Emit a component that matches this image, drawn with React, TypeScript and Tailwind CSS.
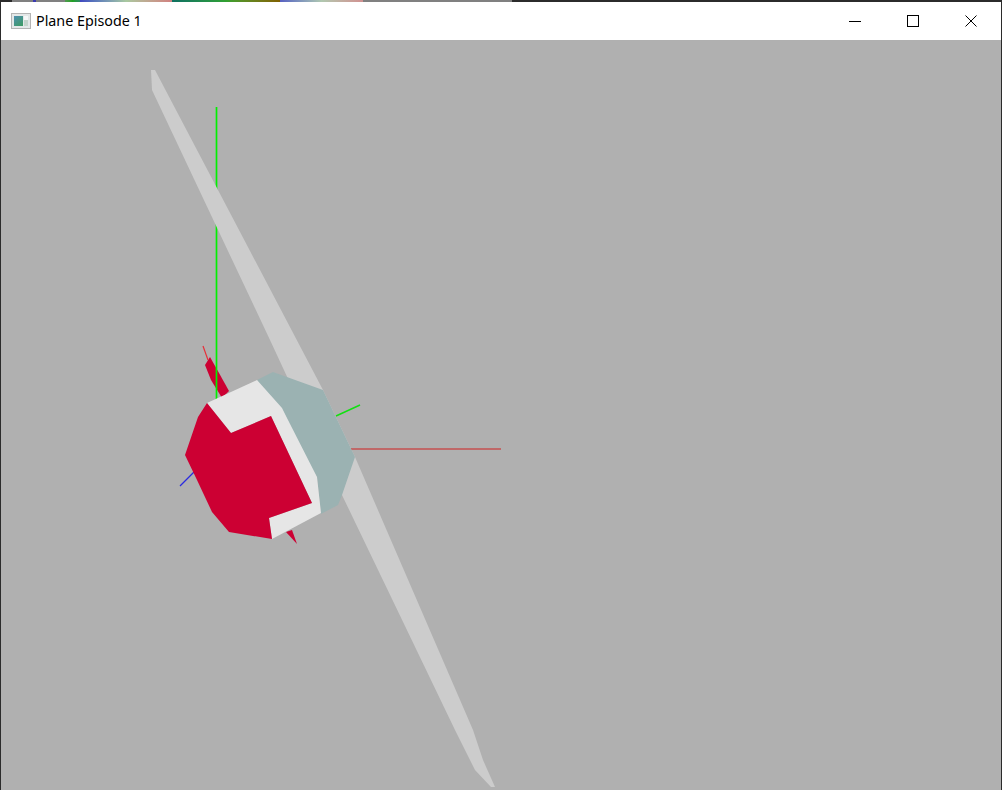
import React from 'react';

const topStrip = [
  'w-[12px] bg-[#2b2b2b]',
  'w-[21px] bg-[#808080]',
  'w-[3px] bg-[#3a3ab0]',
  'w-[29px] bg-[#808080]',
  'w-[15px] bg-linear-to-r from-[#4f9a50] via-[#20a020] to-[#2f8a60]',
  'w-[92px] bg-linear-to-r from-[#4048c0] via-[#a8c8a0] to-[#d08080]',
  'w-[108px] bg-linear-to-r from-[#107060] via-[#30a030] to-[#806000]',
  'w-[83px] bg-linear-to-r from-[#5860c0] via-[#b0c8b0] to-[#d09090]',
  'w-[149px] bg-[#808080]',
];

const AppIcon = () => (
  <svg width="20" height="16" viewBox="0 0 20 16" className="shrink-0">
    <defs>
      <linearGradient id="iconFill" x1="0" y1="0" x2="0.7" y2="1">
        <stop offset="0" stopColor="#4f8fb0" />
        <stop offset="1" stopColor="#3f9a6a" />
      </linearGradient>
    </defs>
    <rect x="0.5" y="0.5" width="19" height="15" fill="#e4e8e8" stroke="#b4b4b4" />
    <rect x="3" y="3" width="9" height="10" fill="url(#iconFill)" />
    <rect x="13" y="3" width="4" height="4" fill="#f6f8f8" />
    <rect x="13" y="7" width="4" height="6" fill="#c4d4cc" />
  </svg>
);

const Scene = () => (
  <svg viewBox="1 40 1000 750" className="block h-full w-full">
    <polygon points="205,365 210,357 219,373 229,391 222,398 211,380" fill="#cc0033" />
    <line x1="203" y1="346" x2="208" y2="360" stroke="#e6303a" strokeWidth="1.2" />
    <line x1="216.5" y1="107" x2="216.5" y2="400" stroke="#00f000" strokeWidth="1.7" />
    <polygon
      points="151,70 155,70 323,390 355,457 473,730 483,760 495,787 491,787 475,770 455,730 342,495 270,340 152,90"
      fill="#cccccc"
    />
    <polygon points="286,532 292,530 297,544" fill="#cc0033" />
    <line x1="351" y1="449" x2="501" y2="449" stroke="#d02020" strokeWidth="1" />
    <line x1="336" y1="416" x2="360" y2="405" stroke="#11e011" strokeWidth="1.4" />
    <line x1="197" y1="469" x2="180" y2="486" stroke="#2a2ae0" strokeWidth="1.2" />
    <polygon points="257,380 273,372 323,390 355,457 342,495 338,505 321,514 317,477" fill="#9bb2b2" />
    <polygon
      points="207,403 257,380 282,408 288,420 317,477 321,513 272,539 269,518 312,503 271,416 231,433"
      fill="#e6e6e6"
    />
    <polygon
      points="207,403 231,433 271,416 312,503 269,518 272,539 229,532 212,512 197,480 185,455 198,417"
      fill="#cc0033"
    />
  </svg>
);

export default function App() {
  return (
    <div className="flex h-[790px] w-[1002px] flex-col overflow-hidden bg-[#2b2b2b]">
      <div className="flex h-[2px] shrink-0">
        {topStrip.map((seg, i) => (
          <div key={i} className={seg} />
        ))}
      </div>
      <div className="flex min-h-0 flex-1 flex-col px-[1px]">
        <div className="flex h-[38px] shrink-0 items-center bg-white">
          <div className="ml-[10px] flex items-center gap-[5px]">
            <AppIcon />
            <span className="font-['Noto_Sans',sans-serif] text-[14.3px] leading-none text-black">Plane Episode 1</span>
          </div>
          <div className="ml-auto mr-[1px] flex h-full">
            <div className="flex w-[58px] items-center justify-center">
              <div className="mr-[1px] h-[1px] w-[12px] bg-black" />
            </div>
            <div className="flex w-[58px] items-center justify-center">
              <div className="mr-[1px] h-[12px] w-[12px] border border-black" />
            </div>
            <div className="flex w-[58px] items-center justify-center">
              <svg width="12" height="12" viewBox="0 0 12 12" stroke="black" strokeWidth="1">
                <path d="M0.5 0.5 L11.5 11.5 M11.5 0.5 L0.5 11.5" />
              </svg>
            </div>
          </div>
        </div>
        <div className="min-h-0 flex-1 bg-[#b0b0b0]">
          <Scene />
        </div>
      </div>
    </div>
  );
}
